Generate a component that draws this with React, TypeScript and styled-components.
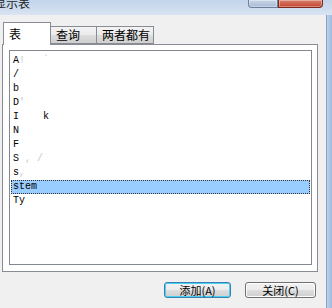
import styled, { createGlobalStyle } from "styled-components";

const GlobalStyle = createGlobalStyle`
  html, body {
    margin: 0;
    padding: 0;
    background: #f0f0f0;
  }
  body {
    width: 332px;
    height: 308px;
    overflow: hidden;
    font-family: "Noto Sans CJK SC", "DejaVu Sans", sans-serif;
  }
`;

const Window = styled.div`
  display: flex;
  flex-direction: column;
  width: 332px;
  height: 308px;
`;

const TitleBar = styled.div`
  height: 15px;
  display: flex;
  align-items: flex-start;
  background: linear-gradient(to bottom, #c3d5ec 0%, #cfdcee 60%, #dae5f3 100%);
  overflow: hidden;
`;

const TitleText = styled.span`
  margin-left: -6px;
  margin-top: -4px;
  font-size: 12px;
  line-height: 14px;
  color: #1e1e1e;
  flex: 1;
`;

const WinButton = styled.div<{ $close?: boolean; $w: number }>`
  width: ${(p) => p.$w}px;
  height: 7px;
  border: 1px solid ${(p) => (p.$close ? "#7a2a1e" : "#6b7e9c")};
  border-top: none;
  border-radius: 0 0 ${(p) => (p.$close ? "4px 0" : "0 4px")};
  background: ${(p) =>
    p.$close
      ? "linear-gradient(to bottom, #d98270, #c4442e)"
      : "linear-gradient(to bottom, #c9d6e8, #a9bad4)"};
  box-shadow: inset 0 0 0 1px rgba(255, 255, 255, 0.35);
`;

const Controls = styled.div`
  display: flex;
  margin-right: 9px;
`;

const Body = styled.div`
  flex: 1;
  display: flex;
`;

const Client = styled.div`
  flex: 1;
  display: flex;
  flex-direction: column;
  padding: 7px 0 0 2px;
  background: #f0f0f0;
`;

const Frame = styled.div`
  width: 5px;
  background: linear-gradient(to right, #bcd0ea, #9fbbe0);
  border-left: 1px solid #8aa2c4;
`;

const TabRow = styled.div`
  display: flex;
  align-items: flex-end;
  height: 22px;
  padding-left: 1px;
  position: relative;
  z-index: 1;
`;

const Tab = styled.div<{ $active?: boolean; $w: number }>`
  width: ${(p) => p.$w}px;
  box-sizing: border-box;
  height: ${(p) => (p.$active ? 23 : 18)}px;
  margin-bottom: ${(p) => (p.$active ? -1 : 0)}px;
  padding: ${(p) => (p.$active ? "3px 0 0 5px" : "0 0 0 5px")};
  border: 1px solid #898c95;
  border-bottom: ${(p) => (p.$active ? "none" : "1px solid #898c95")};
  margin-right: -1px;
  background: ${(p) =>
    p.$active ? "#ffffff" : "linear-gradient(to bottom, #f3f3f3 0%, #ebebeb 50%, #dddddd 51%, #cfcfcf 100%)"};
  font-size: 12px;
  line-height: 16px;
  color: #000;
  position: relative;
  z-index: ${(p) => (p.$active ? 2 : 0)};
`;

const Panel = styled.div`
  width: 316px;
  height: 228px;
  box-sizing: border-box;
  border: 1px solid #898c95;
  background: #ffffff;
  padding: 5px 5px 6px 6px;
  display: flex;
`;

const ListBox = styled.div`
  flex: 1;
  border: 1px solid #828790;
  background: #ffffff;
  padding: 3px 1px 0 1px;
  display: flex;
  flex-direction: column;
`;

const Row = styled.div<{ $selected?: boolean }>`
  height: 14px;
  box-sizing: border-box;
  padding-left: 2px;
  font-family: "Liberation Mono", "DejaVu Sans Mono", monospace;
  font-size: 10px;
  line-height: 14px;
  color: #000;
  white-space: pre;
  background: ${(p) => (p.$selected ? "#99ccff" : "transparent")};
  outline: ${(p) => (p.$selected ? "1px dotted #333" : "none")};
  outline-offset: -1px;
`;

const Faint = styled.span`
  color: #c8c8c8;
`;

const Footer = styled.div`
  display: flex;
  justify-content: flex-end;
  gap: 14px;
  padding: 10px 10px 0 0;
`;

const Button = styled.button<{ $default?: boolean; $w: number }>`
  width: ${(p) => p.$w}px;
  height: 16px;
  padding: 0;
  border: 1px solid ${(p) => (p.$default ? "#3c7fb1" : "#707070")};
  border-radius: 3px;
  background: linear-gradient(to bottom, #f2f2f2 0%, #ebebeb 50%, #dddddd 51%, #cfcfcf 100%);
  box-shadow: inset 0 0 0 1px ${(p) => (p.$default ? "#48d1f4" : "#fcfcfc")};
  font-family: "Noto Sans CJK SC", "DejaVu Sans", sans-serif;
  font-size: 11px;
  line-height: 14px;
  color: #000;
`;

const items: { text: string; faint?: string; selected?: boolean }[] = [
  { text: "A", faint: "!   `" },
  { text: "/" },
  { text: "b" },
  { text: "D", faint: "'" },
  { text: "I    k" },
  { text: "N" },
  { text: "F" },
  { text: "S", faint: " , /" },
  { text: "s", faint: "," },
  { text: "stem", selected: true },
  { text: "Ty" },
];

const App = () => {
  return (
    <Window>
      <GlobalStyle />
      <TitleBar>
        <TitleText>显示表</TitleText>
        <Controls>
          <WinButton $w={28} />
          <WinButton $w={43} $close />
        </Controls>
      </TitleBar>
      <Body>
        <Client>
          <TabRow>
            <Tab $active $w={48}>表</Tab>
            <Tab $w={47}>查询</Tab>
            <Tab $w={58}>两者都有</Tab>
          </TabRow>
          <Panel>
            <ListBox>
              {items.map((it, i) => (
                <Row key={i} $selected={it.selected}>
                  {it.text}
                  {it.faint && <Faint>{it.faint}</Faint>}
                </Row>
              ))}
            </ListBox>
          </Panel>
          <Footer>
            <Button $default $w={67}>添加(A)</Button>
            <Button $w={71}>关闭(C)</Button>
          </Footer>
        </Client>
        <Frame />
      </Body>
    </Window>
  );
};

export default App;
